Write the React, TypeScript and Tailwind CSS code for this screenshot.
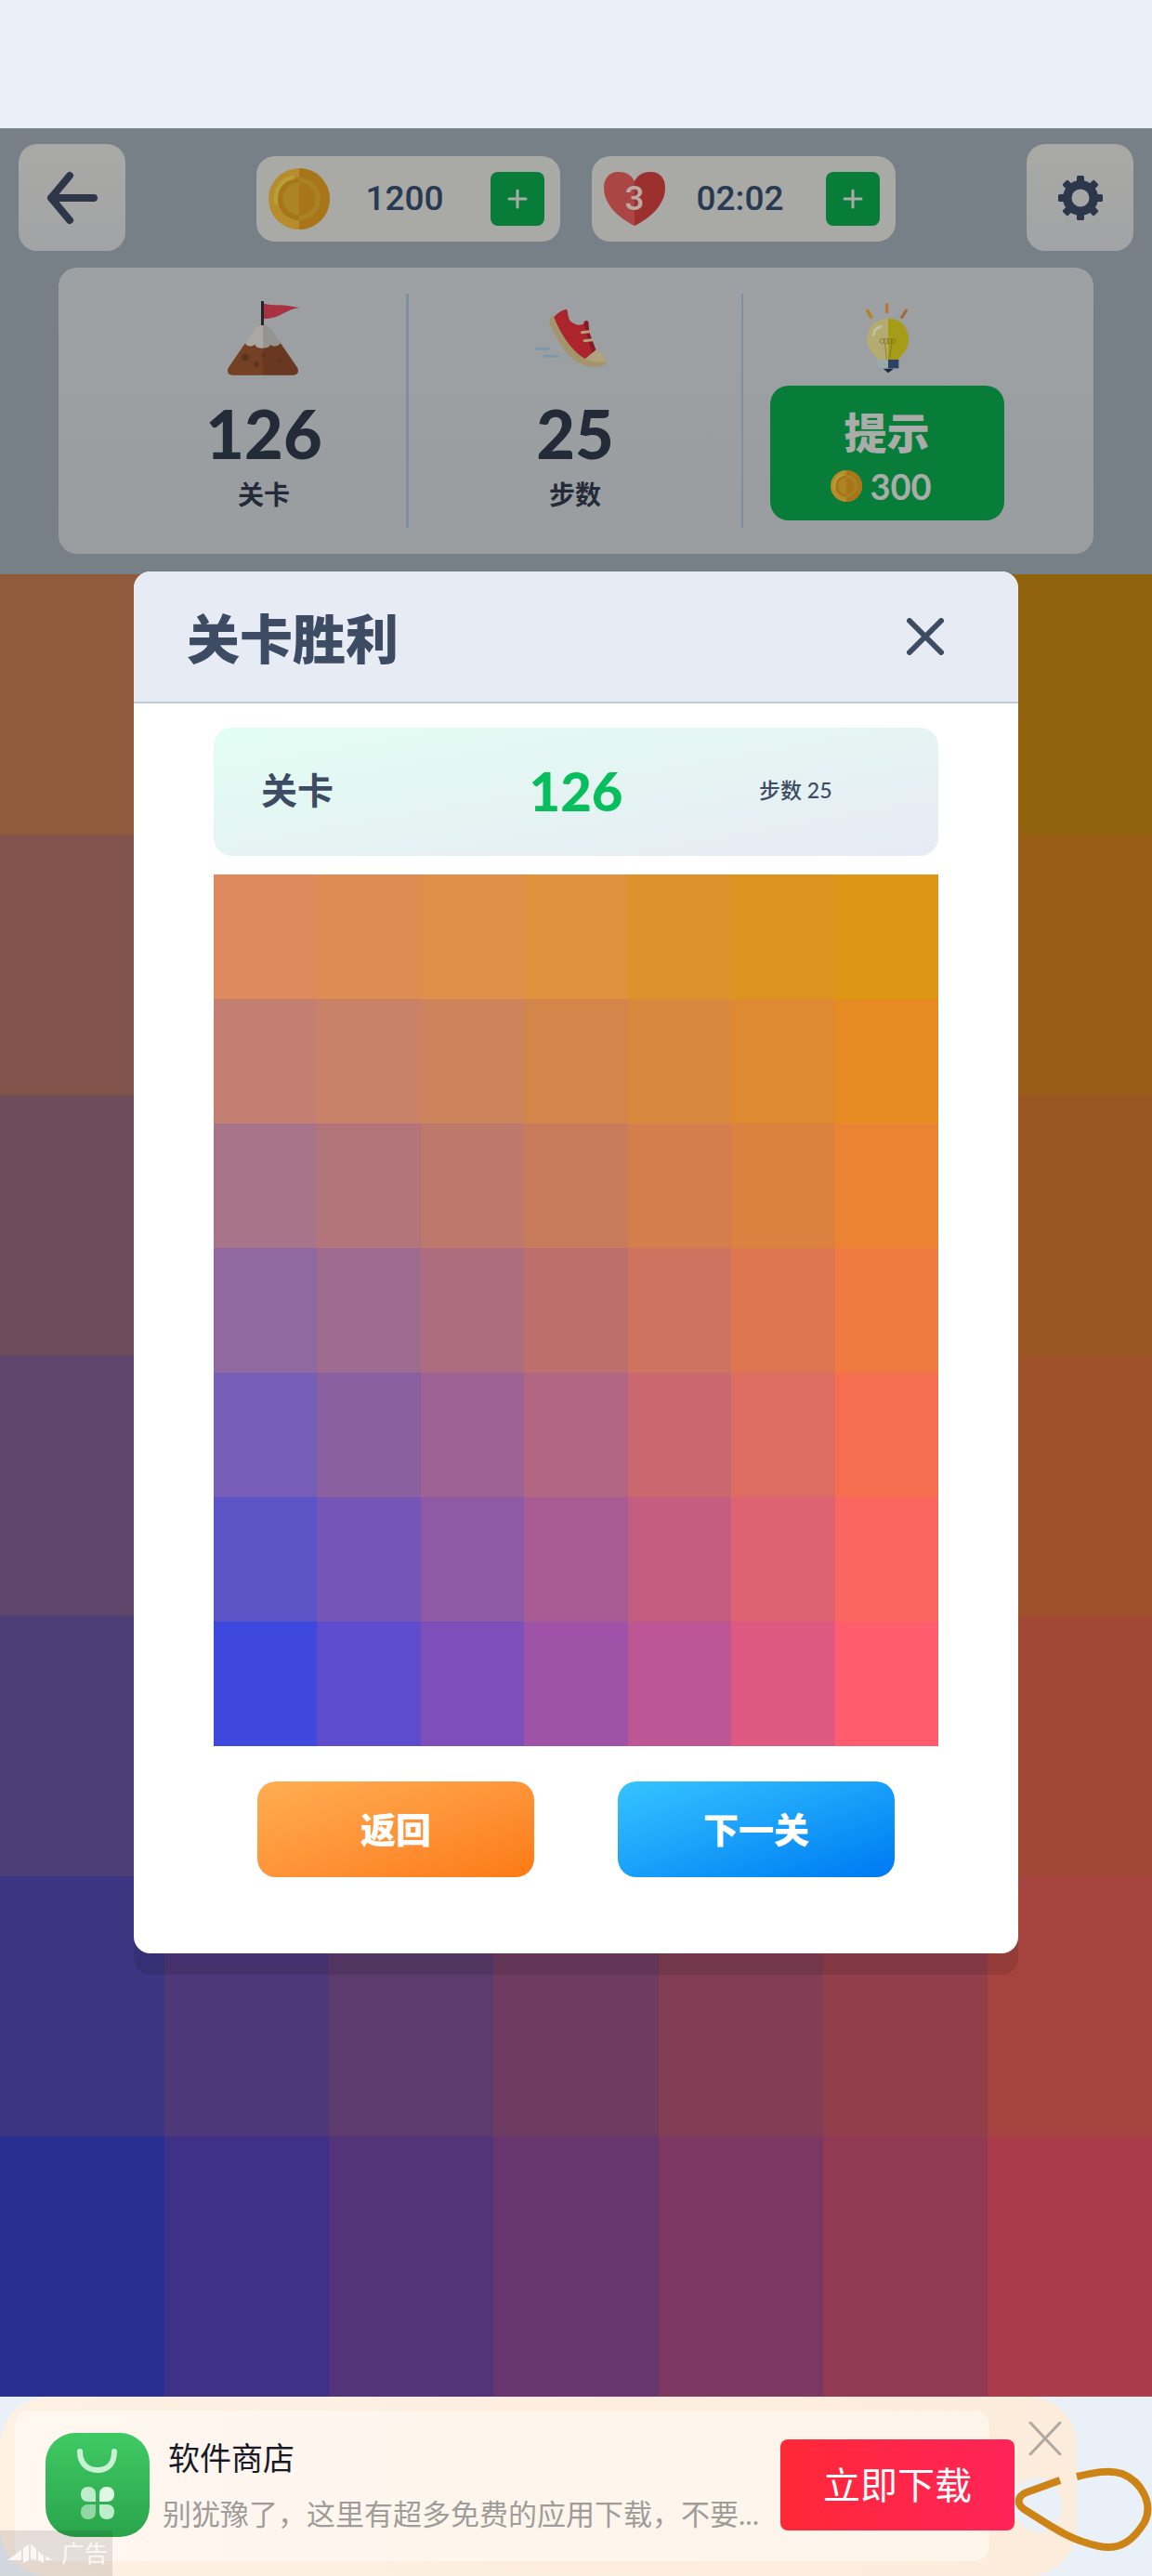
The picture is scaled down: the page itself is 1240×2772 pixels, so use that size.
import type { ReactNode } from "react";

const tiles = [
  ["#de8a5e", "#de8d52", "#de8f48", "#df913b", "#de922b", "#de9421", "#de9615"],
  ["#c47f73", "#c98167", "#cd845c", "#d4864a", "#d9893d", "#de8a31", "#e68c22"],
  ["#a77489", "#b3757a", "#bc796c", "#c87c5c", "#d47e4d", "#dd8140", "#eb8432"],
  ["#8f69a0", "#9f6b8e", "#ae6d7f", "#bd6f6e", "#ce735f", "#dd7650", "#f07b42"],
  ["#775eb6", "#8b60a1", "#9e6293", "#b26681", "#c9696f", "#dd6c61", "#f56e50"],
  ["#5b53c6", "#7556b8", "#8e5aa5", "#a95c94", "#c45e81", "#dd6272", "#fa6760"],
  ["#3e48de", "#5f4bcd", "#7e4fb9", "#9e52a8", "#bc5694", "#dd5982", "#ff5c6e"],
];

function TileGrid({ className }: { className: string }) {
  return (
    <div className={`grid grid-cols-7 grid-rows-7 ${className}`}>
      {tiles.flat().map((color, i) => (
        <div key={i} style={{ backgroundColor: color }} />
      ))}
    </div>
  );
}

function Coin({ className }: { className: string }) {
  return (
    <svg viewBox="0 0 66 66" className={className} aria-hidden="true">
      <circle cx="33" cy="33" r="33" fill="#b68c2c" />
      <path d="M33 0a33 33 0 0 1 0 66z" fill="#a87619" />
      <circle cx="33" cy="33" r="23" fill="#a87619" />
      <path d="M33 10a23 23 0 0 1 0 46z" fill="#a98225" />
      <circle cx="33" cy="33" r="17.500" fill="#ab8525" />
      <path d="M33 15.500a17.500 17.500 0 0 1 0 35z" fill="#a87619" />
      <path d="M8 37C6 23 14 12 26 10" fill="none" stroke="#b8a036" strokeWidth="4.500" strokeLinecap="round" />
    </svg>
  );
}

function Heart() {
  return (
    <svg viewBox="0 0 66 58" className="h-[58px] w-[66px]" aria-hidden="true">
      <path d="M33 10C28 0 19 0 15 0 5 0 0 8 0 17c0 19 17 33 33 41z" fill="#ab4645" />
      <path d="M33 10C38 0 47 0 51 0c10 0 15 8 15 17 0 19-17 33-33 41z" fill="#9c302f" />
    </svg>
  );
}

function Gear() {
  return (
    <svg viewBox="0 0 48 48" className="size-12" fill="#2d374b" aria-hidden="true">
      {[0, 45, 90, 135].map((a) => (
        <rect key={a} x="20" y="0" width="8" height="48" rx="1.500" transform={`rotate(${a} 24 24)`} />
      ))}
      <circle cx="24" cy="24" r="19" />
      <circle cx="24" cy="24" r="9.500" fill="#a5a6a5" />
    </svg>
  );
}

function Mountain() {
  return (
    <svg viewBox="0 0 330 330" className="size-[110px]" aria-hidden="true">
      <path d="M165 50c30 8 60 0 115 14-45 4-70 40-115 34z" fill="#a93242" />
      <path d="M156 42h9v84h-9z" fill="#25242b" />
      <path d="M106 176 50 258c-6 14 2 23 14 23h98V170z" fill="#744124" />
      <path d="M218 176l56 82c6 14-2 23-14 23h-98V170z" fill="#683920" />
      <path d="M162 120c-20 0-26 8-57 58 6 12 18 12 32 4 4 14 18 10 25 13z" fill="#a9a8a3" />
      <path d="M162 120c20 0 26 8 57 58-8 10-20 14-33 5-6 12-14 8-24 12z" fill="#949490" />
      <g fill="#5e341d">
        <circle cx="105" cy="224" r="12" />
        <circle cx="141" cy="246" r="9" />
        <circle cx="163" cy="218" r="6" />
        <circle cx="216" cy="236" r="7" />
      </g>
    </svg>
  );
}

function Shoe() {
  return (
    <svg viewBox="0 0 330 330" className="size-[110px]" aria-hidden="true">
      <path d="M39 196h42M67 220h42" stroke="#7b98aa" strokeWidth="9" strokeLinecap="round" />
      <path d="M97 87c-14 4-19 20-12 33 30 64 62 108 95 124 26 12 56 14 80 4 6-8 6-18 2-26l-70-6z" fill="#a4946c" />
      <path d="M228 200c20 6 36 16 36 36-22 6-46 2-70-8z" fill="#b0a37b" />
      <path d="M97 94c10-12 22-22 40-26 8 4 0 32 20 44 14 10 28 8 38 2l36 86-33 28C160 210 118 150 97 94z" fill="#ac252d" />
      <path d="M193 112c2-8 10-10 15-3l4 36 20 54-13 10z" fill="#851a28" />
      <path d="M187 143l24-3M195 170l25-3" stroke="#b7a077" strokeWidth="9" strokeLinecap="round" />
    </svg>
  );
}

function Bulb() {
  return (
    <svg viewBox="0 0 330 330" className="size-[110px]" aria-hidden="true">
      <g strokeWidth="10" strokeLinecap="round">
        <path d="M101 73l13 21" stroke="#b5831c" />
        <path d="M164 53v24" stroke="#b57a30" />
        <path d="M226 73l-14 21" stroke="#a9683c" />
      </g>
      <path d="M168 98c-44 0-68 32-68 68 0 34 22 46 34 65h34z" fill="#b3ab70" />
      <path d="M168 98c44 0 66 32 66 68 0 34-20 46-33 65h-33z" fill="#a69c16" />
      <path d="M121 150c2-14 10-22 23-26" fill="none" stroke="#c3bfa0" strokeWidth="9" strokeLinecap="round" />
      <g fill="none" stroke="#7a6a1a" strokeWidth="2">
        <circle cx="149" cy="171" r="8" />
        <circle cx="161" cy="171" r="8" />
        <circle cx="173" cy="171" r="8" />
        <circle cx="184" cy="171" r="7" />
        <path d="M158 180l5 51M180 178l-8 53" />
      </g>
      <path d="M134 231h34v28h-34z" fill="#9ba8aa" />
      <path d="M168 231h34v28h-34z" fill="#2c4265" />
      <path d="M152 260h34l-18 14z" fill="#1c2840" />
    </svg>
  );
}

function PlusButton({ label }: { label: string }) {
  return (
    <button type="button" aria-label={label} className="flex size-[58px] items-center justify-center rounded-lg bg-[#087d3a]">
      <svg viewBox="0 0 22 22" className="size-[22px]" stroke="#a9aca8" strokeWidth="3" strokeLinecap="round" aria-hidden="true">
        <path d="M11 2v18M2 11h18" />
      </svg>
    </button>
  );
}

function Pill({ icon, text, label }: { icon: ReactNode; text: string; label: string }) {
  return (
    <div className="flex h-[92px] w-[327px] items-center justify-between rounded-[20px] bg-[#a9a9a6] pr-[17px] pl-[13px]">
      {icon}
      <span className="pr-3 font-[Roboto] text-[37px] font-medium text-[#283952]">{text}</span>
      <PlusButton label={label} />
    </div>
  );
}

const squareButton =
  "flex size-[115px] shrink-0 items-center justify-center rounded-[20px] bg-linear-to-b from-[#a9a9a5] to-[#a2a3a5]";

function Stat({ icon, value, label }: { icon: ReactNode; value: string; label: string }) {
  return (
    <>
      {icon}
      <span className="mt-1.5 text-[72px] leading-[80px] font-black">{value}</span>
      <span className="mt-1.5 text-[28px] leading-10 font-bold">{label}</span>
    </>
  );
}

export default function App() {
  return (
    <div className="flex min-h-screen flex-col bg-[#ebeff8] font-['Lato','Noto_Sans_CJK_SC',sans-serif]">
      <div className="h-[138px] shrink-0" />
      <main className="relative flex flex-1 flex-col">
        <header className="h-[480px] shrink-0 bg-[#788087] pt-[17px]">
          <div className="flex items-center justify-between px-5">
            <button type="button" aria-label="返回" className={squareButton}>
              <svg viewBox="0 0 56 58" className="h-[58px] w-14" fill="none" stroke="#2d3749" strokeWidth="8" strokeLinecap="round" strokeLinejoin="round" aria-hidden="true">
                <path d="M51 29H5M25 5 5 29l20 24" />
              </svg>
            </button>
            <div className="flex gap-[34px] pt-0.5">
              <Pill icon={<Coin className="size-[66px]" />} text="1200" label="增加金币" />
              <Pill
                icon={
                  <span className="relative">
                    <Heart />
                    <span className="absolute inset-0 flex items-center justify-center font-[Roboto] text-[37px] font-medium text-[#b9aaa6]">3</span>
                  </span>
                }
                text="02:02"
                label="增加生命"
              />
            </div>
            <button type="button" aria-label="设置" className={squareButton}>
              <Gear />
            </button>
          </div>
          <div className="mx-[63px] mt-[18px] grid h-[308px] grid-cols-[374fr_3px_358fr_2px_377fr] rounded-[20px] bg-linear-to-b from-[#9da1a4] to-[#999d9f] text-[#242b38]">
            <div className="flex flex-col items-center pt-[22px] pl-[68px]">
              <Stat icon={<Mountain />} value="126" label="关卡" />
            </div>
            <div className="my-7 bg-[#808f9f]" />
            <div className="flex flex-col items-center pt-[22px]">
              <Stat icon={<Shoe />} value="25" label="步数" />
            </div>
            <div className="my-7 bg-[#808f9f]" />
            <div className="flex flex-col items-center pt-[22px] pr-[68px]">
              <Bulb />
              <button type="button" className="-mt-[5px] flex h-[145px] w-[252px] shrink-0 flex-col items-center justify-center rounded-[20px] bg-[#087d3a] pt-2.5 text-[#a9aca9]">
                <span className="text-[46px] leading-[60px] font-black">提示</span>
                <span className="flex items-center gap-2 pr-3 text-[38px] leading-[54px] font-bold">
                  <Coin className="size-[34px]" />
                  300
                </span>
              </button>
            </div>
          </div>
        </header>
        <div className="relative flex min-h-[1600px] flex-1">
          <TileGrid className="flex-1" />
          <div className="absolute inset-0 bg-black/34" />
        </div>

        <section
          role="dialog"
          aria-labelledby="dialog-title"
          className="absolute inset-x-36 top-[477px] rounded-[18px] bg-white pb-[82px] shadow-[0_23px_0_rgba(0,0,0,0.1)]"
        >
          <div className="flex h-[142px] items-center justify-between rounded-t-[18px] border-b-2 border-[#bfced8] bg-[#e7ecf4] pr-20 pl-[57px]">
            <h1 id="dialog-title" className="pt-1 text-[57px] leading-[76px] font-black text-[#3d4b63]">
              关卡胜利
            </h1>
            <button type="button" aria-label="关闭">
              <svg viewBox="0 0 40 40" className="size-10" stroke="#3d4b63" strokeWidth="6" strokeLinecap="round" aria-hidden="true">
                <path d="M3 3l34 34M37 3 3 37" />
              </svg>
            </button>
          </div>
          <div className="px-[86px] pt-[26px]">
            <div className="grid h-[138px] grid-cols-3 items-center rounded-[20px] bg-linear-to-br from-[#e2fef3] via-[#e5f4f3] to-[#e7eaf5] pb-1 text-[#3d4b63]">
              <span className="pl-[51px] text-[39px] font-bold">关卡</span>
              <span className="text-center text-[58px] font-black text-[#06bf5c]">126</span>
              <span className="pl-[67px] text-[23px] font-medium">步数 25</span>
            </div>
            <TileGrid className="mt-5 h-[938px]" />
            <div className="mt-[38px] flex justify-between px-[47px] text-[38px] font-black text-white">
              <button type="button" className="h-[103px] w-[298px] rounded-[20px] bg-linear-to-br from-[#ffad52] to-[#fc7a12]">
                返回
              </button>
              <button type="button" className="h-[103px] w-[298px] rounded-[20px] bg-linear-to-br from-[#36c4ff] to-[#0079f2]">
                下一关
              </button>
            </div>
          </div>
        </section>
      </main>

      <aside className="relative h-[193px] shrink-0 overflow-hidden bg-[#eaf0f7]">
        <div className="relative mr-[81px] flex h-full items-center rounded-[52px] bg-linear-to-r from-[#fef0e3] to-[#fbecdc] pb-1 pl-[49px]">
          <div className="absolute top-[15px] right-[94px] bottom-4 left-4 rounded-2xl bg-linear-to-r from-[#fff7f0] to-[#fdf5ea]" />
          <svg viewBox="0 0 112 112" className="relative size-28 shrink-0" aria-hidden="true">
            <defs>
              <linearGradient id="store" x1="0" y1="0" x2="0" y2="1">
                <stop offset="0" stopColor="#3fca64" />
                <stop offset="1" stopColor="#2aa44b" />
              </linearGradient>
            </defs>
            <rect width="112" height="112" rx="32" fill="url(#store)" />
            <path d="M37 20c0 12 7 20 19 20s18-8 18-20" fill="none" stroke="#c8f2d3" strokeWidth="6" strokeLinecap="round" />
            <path d="M46 58c5 0 8 3 8 8v8h-8c-5 0-8-3-8-8s3-8 8-8z" fill="#bfeccb" />
            <path d="M66 58c5 0 8 3 8 8s-3 8-8 8h-8v-8c0-5 3-8 8-8z" fill="#dff8e6" />
            <path d="M46 77h8v8c0 5-3 8-8 8s-8-3-8-8 3-8 8-8z" fill="#92d6a5" />
            <path d="M58 77h8c5 0 8 3 8 8s-3 8-8 8-8-3-8-8z" fill="#bfeccb" />
          </svg>
          <div className="relative ml-[14px] min-w-0 flex-1">
            <p className="pl-1.5 text-[34px] leading-[50px] text-[#171a26]">软件商店</p>
            <p className="mt-3 text-[31px] leading-[46px] whitespace-nowrap text-[#9f9c99]">别犹豫了，这里有超多免费的应用下载，不要...</p>
          </div>
          <button type="button" className="relative mr-[67px] h-[98px] w-[252px] shrink-0 rounded-lg bg-linear-to-r from-[#ff2836] to-[#ff2458] text-[40px] text-white">
            立即下载
          </button>
          <button type="button" aria-label="关闭广告" className="absolute top-[27px] right-4">
            <svg viewBox="0 0 36 36" className="size-9" stroke="#b0a79f" strokeWidth="3" strokeLinecap="round" aria-hidden="true">
              <path d="M2 1l32 34M34 1 2 35" />
            </svg>
          </button>
        </div>
        <svg viewBox="0 0 148 110" className="absolute right-0 bottom-2 h-[110px] w-[148px]" fill="none" aria-hidden="true">
          <path d="M0 28C8 10 30 8 42 20S54 54 40 66 6 68 0 50z" fill="#eaf0f7" />
          <path d="M49 15 13 28C3 32 2 40 10 46 44 68 62 80 91 86 115 91 129 78 140 60 150 40 136 16 116 8 102 3 84 7 67 11" stroke="#cc8417" strokeWidth="8" />
        </svg>
        <div className="absolute bottom-0 left-0 flex h-[49px] w-[121px] items-center gap-2.5 bg-black/10 pl-2 text-[25px] text-white/80">
          <svg viewBox="0 0 48 20" className="h-5 w-12" fill="currentColor" aria-hidden="true">
            <path d="M0 17 15 6v11zM17 4l6-4v17l-6 3zM25 0l6 5v12l-6-2zM33 7l6 5v8l-6-3zM41 12l7 5h-7z" />
          </svg>
          广告
        </div>
      </aside>
    </div>
  );
}
